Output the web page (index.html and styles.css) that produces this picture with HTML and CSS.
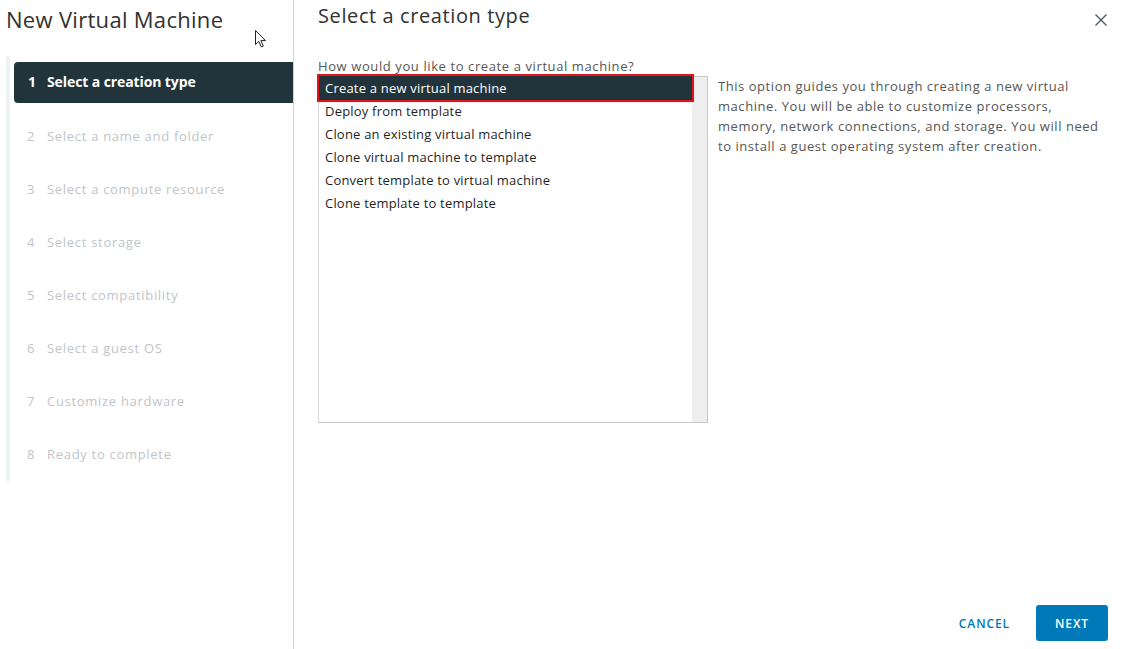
FILE: index.html
```html
<!DOCTYPE html>
<html>
<head>
<meta charset="utf-8">
<link rel="stylesheet" href="styles.css">
</head>
<body>
<div class="dialog">
  <aside class="sidebar">
    <h1 class="title">New Virtual Machine</h1>
    <ol class="steps">
      <li class="step active"><span class="num">1</span>Select a creation type</li>
      <li class="step"><span class="num">2</span>Select a name and folder</li>
      <li class="step"><span class="num">3</span>Select a compute resource</li>
      <li class="step"><span class="num">4</span>Select storage</li>
      <li class="step"><span class="num">5</span>Select compatibility</li>
      <li class="step"><span class="num">6</span>Select a guest OS</li>
      <li class="step"><span class="num">7</span>Customize hardware</li>
      <li class="step"><span class="num">8</span>Ready to complete</li>
    </ol>
    <svg class="cursor" width="14" height="20" viewBox="0 0 14 20"><path d="M1.5 1.5 L1.5 15.5 L4.8 12.4 L7.3 18 L9.3 17.1 L6.9 11.6 L11.5 11.6 Z" fill="#fff" stroke="#222" stroke-width="1" stroke-linejoin="miter"/></svg>
  </aside>
  <main class="content">
    <header class="head">
      <h2 class="heading">Select a creation type</h2>
      <button class="close" aria-label="Close"><svg width="14" height="14" viewBox="0 0 14 14"><path d="M1.5 1.5 L12.5 12.5 M12.5 1.5 L1.5 12.5" stroke="#4b5a61" stroke-width="1.4"/></svg></button>
    </header>
    <div class="question">How would you like to create a virtual machine?</div>
    <div class="row">
      <div class="listbox">
        <ul class="options">
          <li class="opt selected">Create a new virtual machine</li>
          <li class="opt">Deploy from template</li>
          <li class="opt">Clone an existing virtual machine</li>
          <li class="opt">Clone virtual machine to template</li>
          <li class="opt">Convert template to virtual machine</li>
          <li class="opt">Clone template to template</li>
        </ul>
        <div class="scrollbar"></div>
      </div>
      <p class="desc">This option guides you through creating a new virtual machine. You will be able to customize processors, memory, network connections, and storage. You will need to install a guest operating system after creation.</p>
    </div>
    <footer class="footer">
      <button class="btn-link">CANCEL</button>
      <button class="btn-primary">NEXT</button>
    </footer>
  </main>
</div>
</body>
</html>
```

FILE: styles.css
```css
* { box-sizing: border-box; }
html, body { margin: 0; padding: 0; background: #fff; }
body {
  font-family: "Open Sans", "Noto Sans", sans-serif;
  color: #565656;
  width: 1127px;
  height: 649px;
  overflow: hidden;
}
.dialog {
  display: flex;
  height: 649px;
}
.sidebar {
  width: 294px;
  flex: none;
  border-right: 1px solid #cdd3d6;
  position: relative;
}
.title {
  margin: 0;
  padding: 5px 0 0 6px;
  font-weight: 400;
  font-size: 22px;
  line-height: 28px;
  color: #313131;
  letter-spacing: 0.3px;
}
.steps {
  list-style: none;
  margin: 23px 0 0 6px;
  padding: 6px 0 0 8px;
  border-left: 4px solid #eef3f6;
  height: 425px;
}
.step {
  height: 53px;
  display: flex;
  align-items: flex-start;
  padding: 13px 0 0 9px;
  font-size: 13px;
  line-height: 16px;
  color: #bfc5c8;
  letter-spacing: 0.7px;
}
.step .num { width: 20px; flex: none; letter-spacing: 0; }
.step.active {
  height: 41px;
  margin-bottom: 12px;
  background: #21333b;
  color: #fff;
  font-weight: 700;
  font-size: 14px;
  letter-spacing: -0.1px;
  border-radius: 4px 0 0 4px;
  padding-top: 12px;
  margin-left: -4px;
  padding-left: 14px;
}
.step.active .num { width: 19px; }
.cursor { position: absolute; left: 254px; top: 29px; }

.content {
  flex: 1;
  min-width: 0;
  display: flex;
  flex-direction: column;
  padding: 0 19px 8px 24px;
}
.head {
  display: flex;
  justify-content: space-between;
  align-items: flex-start;
}
.heading {
  margin: 0;
  padding-top: 4px;
  font-weight: 400;
  font-size: 20px;
  line-height: 24px;
  color: #313131;
  letter-spacing: 0.6px;
}
.close {
  border: 0;
  background: none;
  padding: 0;
  margin: 13px 0 0 0;
  width: 14px;
  height: 14px;
  display: flex;
}
.question {
  margin-top: 30px;
  margin-bottom: 2px;
  font-size: 13px;
  line-height: 16px;
  color: #565656;
  letter-spacing: 0.6px;
}
.row {
  display: flex;
  gap: 10px;
}
.listbox {
  width: 390px;
  height: 347px;
  flex: none;
  border: 1px solid #c8c8c8;
  border-left-color: #d6d6d6;
  display: flex;
  background: #fff;
}
.options {
  list-style: none;
  margin: 0;
  padding: 0;
  flex: 1;
  position: relative;
}
.opt {
  height: 23px;
  padding: 0 0 0 6px;
  font-size: 13px;
  line-height: 23px;
  color: #1f1f1f;
  letter-spacing: 0.2px;
}
.opt.selected {
  height: 24px;
  line-height: 24px;
  background: #21333b;
  color: #fff;
  outline: 2px solid #e0141b;
  margin: -1px 0 0 0;
  padding-left: 6px;
  box-shadow: 0 1px 3px rgba(0,0,0,0.35);
  position: relative;
  z-index: 1;
}
.scrollbar {
  width: 15px;
  flex: none;
  background: #eeeeee;
}
.desc {
  margin: 0;
  width: 388px;
  font-size: 13px;
  line-height: 20px;
  color: #565656;
  letter-spacing: 0.55px;
}
.footer {
  margin-top: auto;
  display: flex;
  justify-content: flex-end;
  align-items: center;
  gap: 14px;
}
.btn-link, .btn-primary {
  font-family: inherit;
  font-size: 12px;
  font-weight: 600;
  letter-spacing: 0.9px;
  border: 0;
  cursor: pointer;
}
.btn-link {
  background: none;
  color: #0079b8;
  padding: 0 12px;
  height: 36px;
}
.btn-primary {
  background: #0079b8;
  color: #fff;
  border-radius: 3px;
  width: 72px;
  height: 36px;
}
```
